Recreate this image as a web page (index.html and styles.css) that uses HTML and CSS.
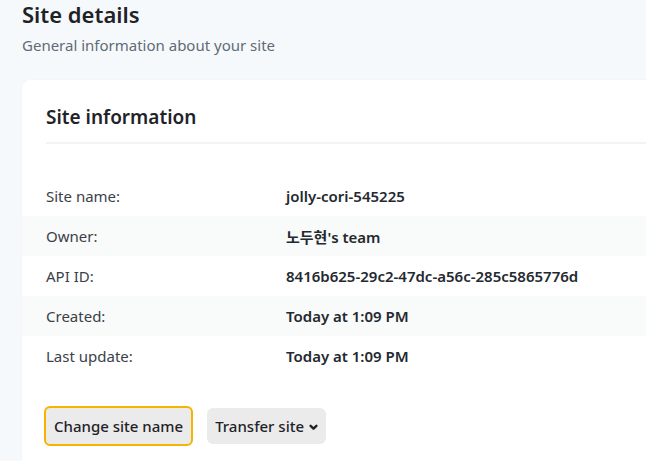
FILE: index.html
```html
<!DOCTYPE html>
<html>
<head>
<meta charset="utf-8">
<link rel="stylesheet" href="styles.css">
</head>
<body>
<div class="page">
  <h1 class="title">Site details</h1>
  <p class="subtitle">General information about your site</p>
  <div class="card">
    <h2 class="card-title">Site information</h2>
    <div class="divider"></div>
    <dl class="rows">
      <div class="row"><dt>Site name:</dt><dd>jolly-cori-545225</dd></div>
      <div class="row alt"><dt>Owner:</dt><dd>노두현's team</dd></div>
      <div class="row"><dt>API ID:</dt><dd>8416b625-29c2-47dc-a56c-285c5865776d</dd></div>
      <div class="row alt"><dt>Created:</dt><dd>Today at 1:09 PM</dd></div>
      <div class="row"><dt>Last update:</dt><dd>Today at 1:09 PM</dd></div>
    </dl>
    <div class="actions">
      <button class="btn btn-focus">Change site name</button>
      <button class="btn">Transfer site <svg class="chev" width="9" height="7" viewBox="0 0 9 7"><path d="M1.6 1.8 L4.5 4.7 L7.4 1.8" fill="none" stroke="#1f2328" stroke-width="2.4" stroke-linecap="round" stroke-linejoin="round"/></svg></button>
    </div>
  </div>
</div>
</body>
</html>
```
FILE: styles.css
```css
* { box-sizing: border-box; }
html, body { margin: 0; padding: 0; }
body {
  background: #f6f9fb;
  font-family: "Noto Sans", "Noto Sans CJK KR", sans-serif;
  color: #24292f;
  overflow: hidden;
}
.page {
  padding: 0 0 0 22px;
  width: 646px;
  height: 461px;
}
.title {
  margin: 0;
  font-size: 22px;
  font-weight: 600;
  line-height: 28px;
  color: #1f2328;
}
.subtitle {
  margin: 3px 0 0;
  font-size: 15px;
  line-height: 28px;
  color: #5f6b76;
}
.card {
  margin-top: 21px;
  background: #fff;
  border-radius: 8px 0 0 0;
  box-shadow: 0 0 2px rgba(0,0,0,0.05);
  padding: 24px 0 0 24px;
  height: 381px;
}
.card-title {
  margin: 0;
  font-size: 19px;
  font-weight: 600;
  line-height: 26px;
  color: #1f2328;
}
.divider {
  height: 2px;
  background: #f2f3f3;
  margin-top: 12px;
}
.rows {
  margin: 32px 0 0 -24px;
}
.row {
  display: flex;
  height: 40px;
  align-items: center;
  padding-left: 24px;
  font-size: 15px;
}
.row.alt { background: #f9fafa; }
.row dt {
  width: 240px;
  color: #3a4149;
}
.row dd {
  margin: 0;
  font-weight: 600;
  color: #24292f;
}
.actions {
  display: flex;
  align-items: center;
  gap: 14px;
  margin: 30px 0 0 -2px;
}
.btn {
  font-family: inherit;
  font-size: 15px;
  font-weight: 500;
  color: #1f2328;
  background: #ebebeb;
  border: none;
  border-radius: 6px;
  height: 36px;
  padding: 0 8px;
  display: flex;
  align-items: center;
  gap: 5px;
}
.btn-focus {
  height: 40px;
  border: 2px solid #f4b400;
  padding: 0 8px;
}
.chev { display: block; margin-top: 2px; }
```
